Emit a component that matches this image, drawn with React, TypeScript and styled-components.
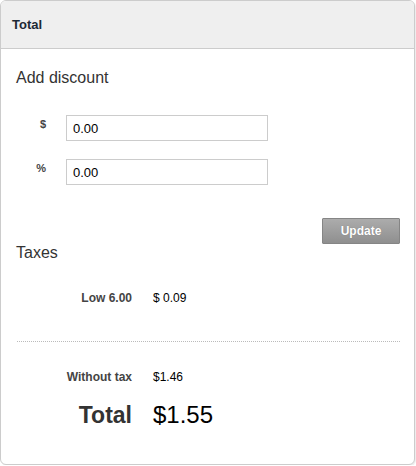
import React from 'react'
import styled, { createGlobalStyle } from 'styled-components'

const GlobalStyle = createGlobalStyle`
  html, body {
    margin: 0;
    padding: 0;
    background: #fff;
  }
  body {
    font-family: 'Liberation Sans', Arial, sans-serif;
    color: #333;
  }
`

const Card = styled.div`
  box-sizing: border-box;
  width: 415px;
  height: 465px;
  border: 1px solid #ccc;
  border-radius: 6px;
  overflow: hidden;
  background: #fff;
  box-shadow: 1px 1px 1px rgba(0, 0, 0, 0.08);
`

const Header = styled.div`
  box-sizing: border-box;
  height: 48px;
  padding: 0 11px;
  display: flex;
  align-items: center;
  background: #efefef;
  border-bottom: 1px solid #ccc;
  font-size: 13px;
  font-weight: bold;
  color: #1d2935;
`

const Body = styled.div`
  padding: 0 14px 0 15px;
`

const SectionTitle = styled.h3<{ $top: number }>`
  margin: ${p => p.$top}px 0 0;
  font-size: 16px;
  font-weight: normal;
  line-height: 18px;
  color: #333;
`

const Form = styled.div`
  margin-top: 28px;
  display: grid;
  grid-template-columns: 50px 202px;
  row-gap: 18px;
`

const FieldLabel = styled.label`
  padding: 3px 20px 0 0;
  text-align: right;
  font-size: 11px;
  font-weight: bold;
  color: #444;
`

const Input = styled.input`
  box-sizing: border-box;
  width: 202px;
  height: 26px;
  margin: 0;
  padding: 0 6px;
  border: 1px solid #ccc;
  border-radius: 0;
  font-family: 'Liberation Sans', Arial, sans-serif;
  font-size: 13px;
  color: #000;
  outline: none;
`

const ButtonRow = styled.div`
  margin-top: 33px;
  display: flex;
  justify-content: flex-end;
`

const Button = styled.button`
  box-sizing: border-box;
  width: 78px;
  height: 26px;
  border: 1px solid #858585;
  border-radius: 1px;
  background: linear-gradient(#acacac, #8f8f8f);
  color: #fff;
  font-family: 'Liberation Sans', Arial, sans-serif;
  font-size: 12px;
  font-weight: bold;
  text-shadow: 0 0 1px rgba(0, 0, 0, 0.25);
  cursor: pointer;
`

const Summary = styled.div<{ $top: number }>`
  margin-top: ${p => p.$top}px;
  display: grid;
  grid-template-columns: 116px auto;
  column-gap: 21px;
  align-items: center;
`

const SumLabel = styled.div<{ $big?: boolean }>`
  text-align: right;
  font-weight: bold;
  font-size: ${p => (p.$big ? '23px' : '12px')};
  line-height: ${p => (p.$big ? '28px' : '16px')};
  color: ${p => (p.$big ? '#333' : '#444')};
`

const SumValue = styled.div<{ $big?: boolean }>`
  font-size: ${p => (p.$big ? '24px' : '12px')};
  line-height: ${p => (p.$big ? '28px' : '16px')};
  color: #000;
`

const Divider = styled.hr`
  margin: 35px 0 0 1px;
  border: 0;
  border-top: 1px dotted #bbb;
  height: 0;
`

const App = () => {
  return (
    <>
      <GlobalStyle />
      <Card>
        <Header>Total</Header>
        <Body>
          <SectionTitle $top={20}>Add discount</SectionTitle>
          <Form>
            <FieldLabel>$</FieldLabel>
            <Input defaultValue="0.00" />
            <FieldLabel>%</FieldLabel>
            <Input defaultValue="0.00" />
          </Form>
          <ButtonRow>
            <Button>Update</Button>
          </ButtonRow>
          <SectionTitle $top={0}>Taxes</SectionTitle>
          <Summary $top={28}>
            <SumLabel>Low 6.00</SumLabel>
            <SumValue>$ 0.09</SumValue>
          </Summary>
          <Divider />
          <Summary $top={27}>
            <SumLabel>Without tax</SumLabel>
            <SumValue>$1.46</SumValue>
          </Summary>
          <Summary $top={16}>
            <SumLabel $big>Total</SumLabel>
            <SumValue $big>$1.55</SumValue>
          </Summary>
        </Body>
      </Card>
    </>
  )
}

export default App
